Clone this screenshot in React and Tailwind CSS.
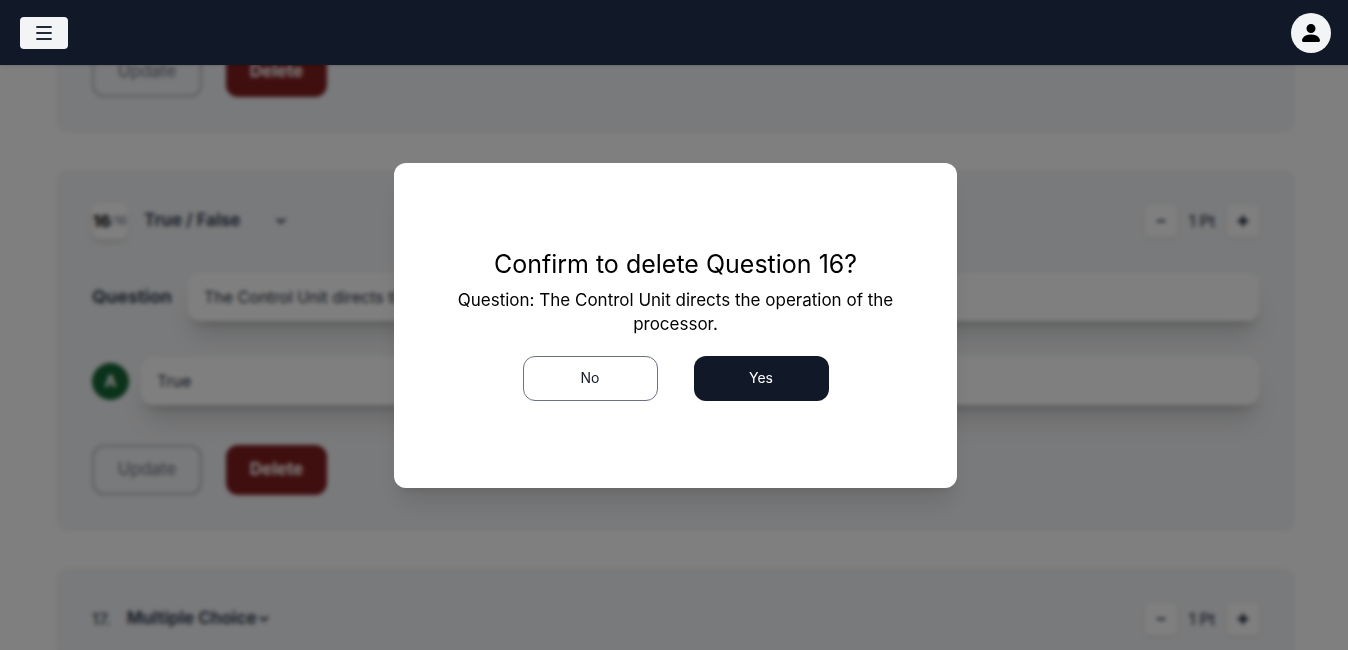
import { BsPersonFill } from "react-icons/bs";
import { FiChevronDown, FiMinus, FiPlus } from "react-icons/fi";

const card = "rounded-xl bg-[#f3f4f6] px-9";
const field =
  "h-12 min-w-0 flex-1 rounded-xl bg-white px-4 text-base text-gray-800 shadow-[0_20px_25px_-5px_rgba(0,0,0,0.13),0_8px_10px_-6px_rgba(0,0,0,0.2)] outline-none";

function Actions() {
  return (
    <div className="flex gap-6">
      <button className="h-[50px] w-[110px] rounded-xl border-2 border-[#b6bac2] text-[17px] text-gray-500">
        Update
      </button>
      <button className="h-[50px] w-[101px] rounded-xl bg-[#7f1d1d] text-[17px] font-bold text-white">
        Delete
      </button>
    </div>
  );
}

function Points() {
  const step =
    "flex h-8 w-8 items-center justify-center rounded-sm bg-white text-gray-800 shadow-sm";
  return (
    <div className="flex items-center text-gray-700">
      <button className={step} aria-label="Fewer points">
        <FiMinus className="h-3 w-3" strokeWidth={4} />
      </button>
      <span className="w-[50px] text-center text-base font-medium">1 Pt</span>
      <button className={step} aria-label="More points">
        <FiPlus className="h-3.5 w-3.5" strokeWidth={5} />
      </button>
    </div>
  );
}

function TypeSelect({ label, value, width }) {
  return (
    <div className={`flex items-center ${width}`}>
      <select
        aria-label={label}
        defaultValue={value}
        className="min-w-0 flex-1 appearance-none bg-transparent text-[17px] font-bold text-gray-700 outline-none"
      >
        <option>True / False</option>
        <option>Multiple Choice</option>
      </select>
      <FiChevronDown className="h-3.5 w-3.5 shrink-0 text-gray-700" strokeWidth={4} />
    </div>
  );
}

export default function App() {
  return (
    <div className="h-screen overflow-hidden bg-white font-['Inter',sans-serif]">
      <header className="fixed inset-x-0 top-0 z-30 flex h-[65px] items-center justify-between bg-[#111827] pr-[17px] pl-5 shadow-sm">
        <button
          aria-label="Open menu"
          className="flex h-8 w-12 items-center justify-center rounded-sm bg-[#f3f4f6] text-[#1f2937]"
        >
          <svg
            viewBox="0 0 16 16"
            className="h-4 w-4"
            stroke="currentColor"
            strokeWidth="1.8"
            strokeLinecap="round"
          >
            <path d="M1 2h14M1 8h14M1 14h14" />
          </svg>
        </button>
        <button
          aria-label="Account"
          className="flex h-10 w-10 items-center justify-center rounded-full bg-[#f3f4f6] text-black"
        >
          <BsPersonFill className="h-6 w-6" />
        </button>
      </header>

      <main className="flex flex-col gap-[37px] pr-[53px] pl-14">
        <section className={`${card} pt-[47px] pb-9`}>
          <Actions />
        </section>

        <section className={`${card} pt-[33px] pb-9`}>
          <div className="flex h-9 items-center justify-between">
            <div className="flex items-center gap-4">
              <div className="flex h-9 w-9 items-center justify-center rounded-lg bg-white shadow-md">
                <span className="text-base font-bold text-black">16</span>
                <span className="text-xs text-gray-500">/16</span>
              </div>
              <TypeSelect label="Type of question 16" value="True / False" width="w-[144px]" />
            </div>
            <Points />
          </div>
          <div className="mt-[34px] flex items-center gap-3">
            <label htmlFor="question" className="w-[84px] text-lg font-bold text-gray-700">
              Question
            </label>
            <input
              id="question"
              className={field}
              defaultValue="The Control Unit directs the operation of the processor."
            />
          </div>
          <div className="mt-9 mb-10 flex items-center gap-3">
            <label
              htmlFor="answer"
              className="flex h-[37px] w-[37px] items-center justify-center rounded-full bg-[#166534] font-bold text-white"
            >
              A
            </label>
            <input id="answer" className={field} defaultValue="True" />
          </div>
          <Actions />
        </section>

        <section className={`${card} h-[360px] shrink-0 pt-[33px]`}>
          <div className="flex h-9 items-center justify-between">
            <div className="flex items-center gap-4">
              <span className="text-base font-medium text-gray-700">17.</span>
              <TypeSelect label="Type of question 17" value="Multiple Choice" width="w-[144px]" />
            </div>
            <Points />
          </div>
        </section>
      </main>

      <div className="fixed inset-0 z-20 flex items-center justify-center bg-black/50 pl-[3px] backdrop-blur-[2px]">
        <div
          role="dialog"
          aria-modal="true"
          aria-labelledby="dialog-title"
          className="flex min-h-[325px] w-[563px] flex-col items-center justify-center rounded-xl bg-white px-14 pb-0.5 text-center text-black shadow-xl"
        >
          <h2 id="dialog-title" className="text-[25px] leading-8">
            Confirm to delete Question 16?
          </h2>
          <p className="mt-2 text-[17px] leading-6">
            Question: The Control Unit directs the operation of the processor.
          </p>
          <div className="mt-5 flex gap-9 text-sm">
            <button className="h-[45px] w-[135px] rounded-xl border border-gray-500 text-[#111827]">
              No
            </button>
            <button className="h-[45px] w-[135px] rounded-xl bg-[#111827] text-white">Yes</button>
          </div>
        </div>
      </div>
    </div>
  );
}
